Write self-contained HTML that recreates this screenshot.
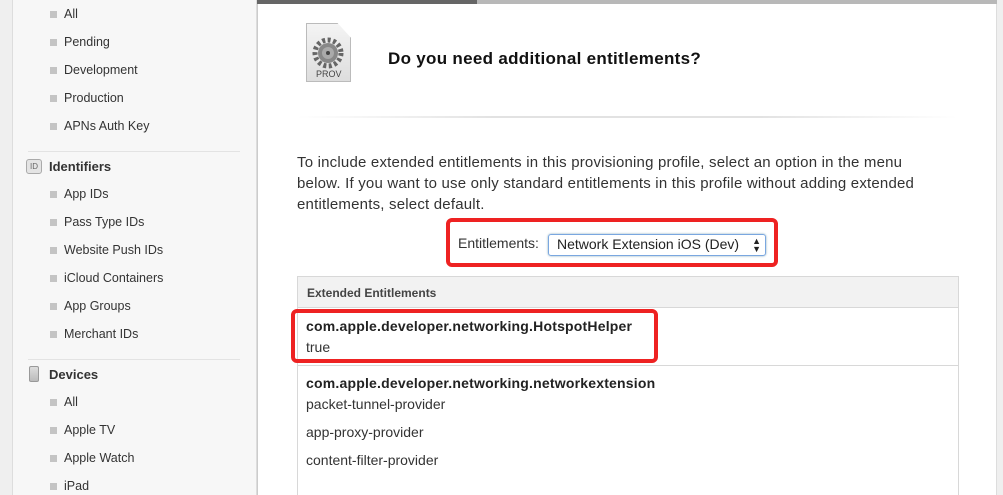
<!DOCTYPE html>
<html><head><style>
*{margin:0;padding:0;box-sizing:border-box}
html,body{width:1003px;height:495px;overflow:hidden}
body{background:#efefef;font-family:"Liberation Sans",sans-serif;color:#333;position:relative}
.sb{position:absolute;left:12px;top:-2px;width:245px;height:510px;background:#f7f7f7;border:1px solid #ddd}
.it{position:absolute;left:64px;font-size:12.5px;color:#333}
.it:before{content:"";position:absolute;left:-14px;top:4px;width:7px;height:7px;background:#c4c4c4}
.hd{position:absolute;left:49px;font-size:13px;font-weight:bold;color:#333}
.sep{position:absolute;left:28px;width:212px;height:1px;background:#e3e3e3}
.main{position:absolute;left:257px;top:0;width:740px;height:495px;background:#fff;border-left:1px solid #ccc;border-right:1px solid #ddd}
.t{position:absolute;font-size:14px;color:#333;white-space:nowrap}
</style></head><body>
<div class="sb"></div>
<div class="it" style="top:7px">All</div>
<div class="it" style="top:35px">Pending</div>
<div class="it" style="top:63px">Development</div>
<div class="it" style="top:91px">Production</div>
<div class="it" style="top:119px">APNs Auth Key</div>
<div class="sep" style="top:151px"></div>
<div style="position:absolute;left:26px;top:159px;width:16px;height:15px;border:1px solid #aaa;border-radius:3px;background:#e4e4e4;font-size:8px;color:#666;text-align:center;line-height:13px">ID</div>
<div class="hd" style="top:159px">Identifiers</div>
<div class="it" style="top:187px">App IDs</div>
<div class="it" style="top:215px">Pass Type IDs</div>
<div class="it" style="top:243px">Website Push IDs</div>
<div class="it" style="top:271px">iCloud Containers</div>
<div class="it" style="top:299px">App Groups</div>
<div class="it" style="top:327px">Merchant IDs</div>
<div class="sep" style="top:359px"></div>
<div style="position:absolute;left:29px;top:366px;width:10px;height:16px;border:1px solid #999;border-radius:2px;background:linear-gradient(#ddd,#bbb)"></div>
<div class="hd" style="top:367px">Devices</div>
<div class="it" style="top:395px">All</div>
<div class="it" style="top:423px">Apple TV</div>
<div class="it" style="top:451px">Apple Watch</div>
<div class="it" style="top:479px">iPad</div>
<div class="main"></div>
<div style="position:absolute;left:257px;top:0;width:220px;height:4px;background:#666"></div>
<div style="position:absolute;left:477px;top:0;width:520px;height:4px;background:#b8b8b8"></div>
<div style="position:absolute;left:306px;top:23px;width:45px;height:59px;background:linear-gradient(#f4f4f4,#ddd);border:1px solid #bbb;clip-path:polygon(0 0,70% 0,100% 25%,100% 100%,0 100%)"></div>
<svg style="position:absolute;left:311px;top:36px" width="34" height="34" viewBox="0 0 34 34"><circle cx="17" cy="17" r="13" fill="none" stroke="#666" stroke-width="5" stroke-dasharray="3 2.5"/><circle cx="17" cy="17" r="10" fill="#888"/><circle cx="17" cy="17" r="6" fill="#aaa"/><circle cx="17" cy="17" r="2" fill="#444"/></svg>
<div style="position:absolute;left:316px;top:69px;font-size:9px;color:#444">PROV</div>
<div style="position:absolute;left:388px;top:49px;font-size:17px;font-weight:bold;color:#111;letter-spacing:0.3px">Do you need additional entitlements?</div>
<div style="position:absolute;left:297px;top:116px;width:660px;height:2px;background:linear-gradient(90deg,#fff,#e2e2e2 30%,#e2e2e2 70%,#fff)"></div>
<div class="t" style="left:297px;top:152px;line-height:21px;font-size:15px;letter-spacing:0.2px">To include extended entitlements in this provisioning profile, select an option in the menu<br>below. If you want to use only standard entitlements in this profile without adding extended<br>entitlements, select default.</div>
<div style="position:absolute;left:446px;top:218px;width:332px;height:49px;border:4px solid #ee2222;border-radius:6px"></div>
<div class="t" style="left:458px;top:235px">Entitlements:</div>
<div style="position:absolute;left:548px;top:234px;width:218px;height:22px;border:1px solid #7aa7e0;border-radius:3px;box-shadow:0 0 2px #8ab;font-size:14px;padding:1px 0 0 8px;color:#222;white-space:nowrap">Network Extension iOS (Dev)<span style="position:absolute;right:4px;top:2px;font-size:9px;line-height:8px">▲<br>▼</span></div>
<div style="position:absolute;left:297px;top:276px;width:662px;height:219px;border:1px solid #d8d8d8;border-bottom:none"></div>
<div style="position:absolute;left:298px;top:277px;width:660px;height:31px;background:#f2f2f2;border-bottom:1px solid #d8d8d8;font-size:12px;font-weight:bold;padding:9px 0 0 9px;color:#444">Extended Entitlements</div>
<div style="position:absolute;left:298px;top:365px;width:660px;height:1px;background:#d8d8d8"></div>
<div style="position:absolute;left:291px;top:309px;width:367px;height:54px;border:4px solid #ee2222;border-radius:6px"></div>
<div class="t" style="left:306px;top:318px;font-weight:bold;color:#222;letter-spacing:0.2px">com.apple.developer.networking.HotspotHelper</div>
<div class="t" style="left:306px;top:339px">true</div>
<div class="t" style="left:306px;top:375px;font-weight:bold;color:#222;letter-spacing:0.2px">com.apple.developer.networking.networkextension</div>
<div class="t" style="left:306px;top:396px">packet-tunnel-provider</div>
<div class="t" style="left:306px;top:424px">app-proxy-provider</div>
<div class="t" style="left:306px;top:452px">content-filter-provider</div>
</body></html>
